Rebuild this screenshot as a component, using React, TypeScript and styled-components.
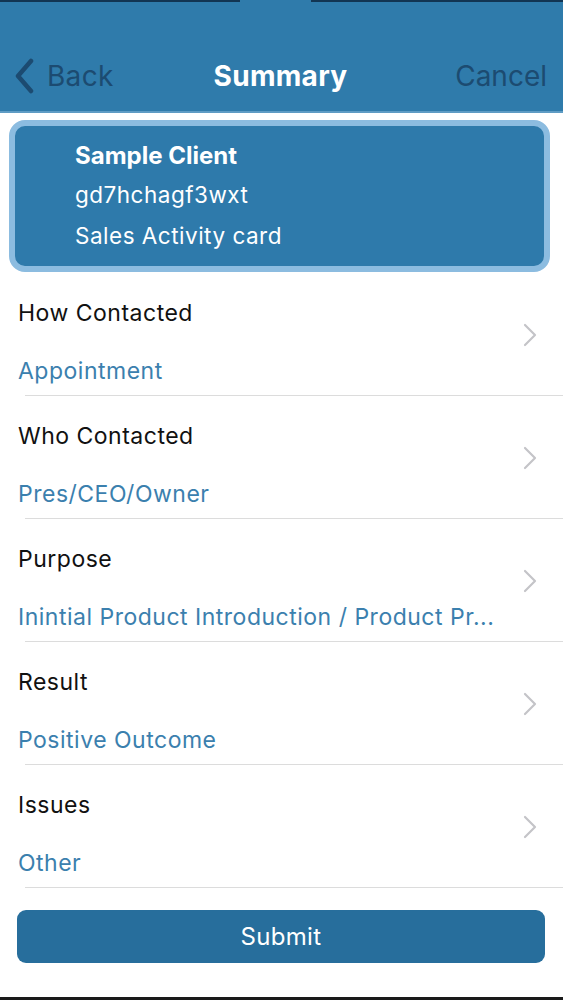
import React from "react";
import styled, { createGlobalStyle } from "styled-components";

const Global = createGlobalStyle`
  html, body { margin: 0; padding: 0; background: #ffffff; }
  body { font-family: Inter, "Liberation Sans", Arial, sans-serif; -webkit-font-smoothing: antialiased; }
  * { box-sizing: border-box; }
`;

const Page = styled.div`
  width: 563px;
  height: 1000px;
  display: flex;
  flex-direction: column;
  background: #ffffff;
  overflow: hidden;
`;

const StatusStrip = styled.div`
  height: 2px;
  display: flex;
  justify-content: space-between;
  background: #2f7bab;
`;

const StripPart = styled.div<{ $w: number }>`
  width: ${(p) => p.$w}px;
  background: #123553;
`;

const Header = styled.header`
  height: 111px;
  background: #2f7bab;
  display: grid;
  grid-template-columns: 1fr auto 1fr;
  align-items: center;
  padding: 38px 16px 0 14px;
  border-bottom: 2px solid #5f9cc4;
`;

const BackButton = styled.div`
  display: flex;
  align-items: center;
  gap: 11px;
  color: #1c4b71;
  font-size: 28px;
  letter-spacing: 0.3px;
  justify-self: start;
`;

const Title = styled.div`
  color: #ffffff;
  font-size: 28px;
  font-weight: 700;
  letter-spacing: 0.3px;
`;

const CancelButton = styled.div`
  color: #1c4b71;
  font-size: 28px;
  justify-self: end;
`;

const Card = styled.section`
  margin: 7px 13px 0 9px;
  border: 6px solid #8cbce0;
  border-radius: 16px;
  background: #2e7aab;
  padding: 12px 0 10px 60px;
  display: flex;
  flex-direction: column;
  color: #ffffff;
`;

const CardTitle = styled.div`
  font-size: 24px;
  font-weight: 700;
  line-height: 36px;
`;

const CardLine = styled.div`
  font-size: 22.5px;
  letter-spacing: 0.5px;
  line-height: 41px;
`;

const List = styled.div`
  display: flex;
  flex-direction: column;
  margin-top: 1px;
`;

const Row = styled.div`
  display: flex;
  align-items: center;
  height: 123px;
  padding: 0 26px 0 18px;
  position: relative;
  &::after {
    content: "";
    position: absolute;
    left: 25px;
    right: 0;
    bottom: 0;
    height: 1.5px;
    background: #dcdcdc;
  }
`;

const RowText = styled.div`
  flex: 1;
  display: flex;
  flex-direction: column;
  gap: 30px;
  padding-top: 26px;
  align-self: flex-start;
`;

const Label = styled.div`
  color: #111111;
  font-size: 23px;
  letter-spacing: 0.5px;
  line-height: 28px;
`;

const Value = styled.div`
  color: #3b80ae;
  font-size: 23px;
  letter-spacing: 0.5px;
  line-height: 28px;
  white-space: nowrap;
`;

const Chevron = styled.svg`
  width: 14px;
  height: 24px;
`;

const Footer = styled.div`
  padding: 22px 18px 0 17px;
`;

const SubmitButton = styled.button`
  width: 100%;
  height: 53px;
  border: none;
  border-radius: 9px;
  background: #276e9c;
  color: #ffffff;
  font-family: Inter, "Liberation Sans", Arial, sans-serif;
  font-size: 24px;
  letter-spacing: 0.3px;
  cursor: pointer;
`;

const BottomEdge = styled.div`
  margin-top: auto;
  height: 3px;
  background: #1a1a1a;
`;

const rows = [
  { label: "How Contacted", value: "Appointment" },
  { label: "Who Contacted", value: "Pres/CEO/Owner" },
  { label: "Purpose", value: "Inintial Product Introduction / Product Pr..." },
  { label: "Result", value: "Positive Outcome" },
  { label: "Issues", value: "Other" },
];

export default function App() {
  return (
    <Page>
      <Global />
      <StatusStrip>
        <StripPart $w={240} />
        <StripPart $w={252} />
      </StatusStrip>
      <Header>
        <BackButton>
          <svg width="22" height="36" viewBox="0 0 22 36">
            <path d="M17 3 L4 18 L17 33" fill="none" stroke="#1c4b71" strokeWidth="4.5" strokeLinecap="round" strokeLinejoin="round" />
          </svg>
          <span>Back</span>
        </BackButton>
        <Title>Summary</Title>
        <CancelButton>Cancel</CancelButton>
      </Header>
      <Card>
        <CardTitle>Sample Client</CardTitle>
        <CardLine>gd7hchagf3wxt</CardLine>
        <CardLine>Sales Activity card</CardLine>
      </Card>
      <List>
        {rows.map((r) => (
          <Row key={r.label}>
            <RowText>
              <Label>{r.label}</Label>
              <Value>{r.value}</Value>
            </RowText>
            <Chevron viewBox="0 0 14 24">
              <path d="M2 2 L12 12 L2 22" fill="none" stroke="#c4c4c8" strokeWidth="2.2" strokeLinecap="round" strokeLinejoin="round" />
            </Chevron>
          </Row>
        ))}
      </List>
      <Footer>
        <SubmitButton>Submit</SubmitButton>
      </Footer>
      <BottomEdge />
    </Page>
  );
}
